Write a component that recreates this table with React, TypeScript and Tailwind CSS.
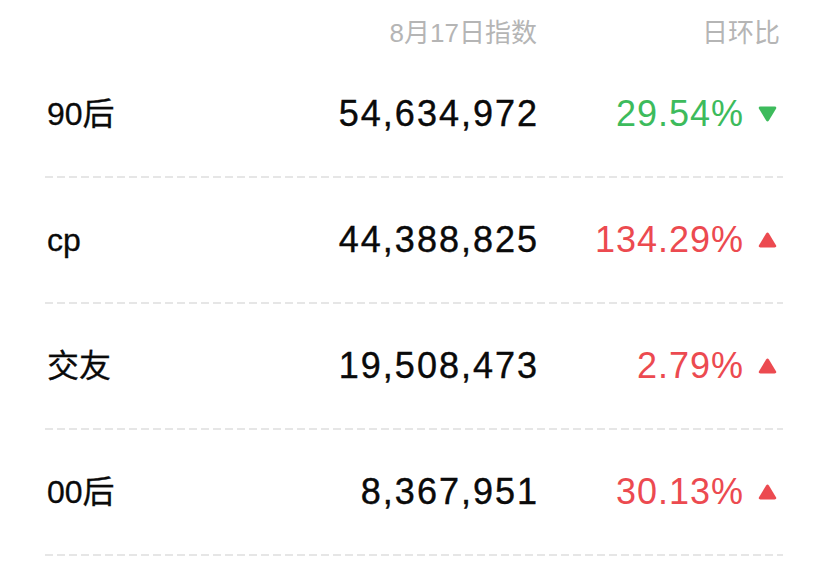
const rows = [
  { name: "90后", value: "54,634,972", pct: "29.54%", up: false },
  { name: "cp", value: "44,388,825", pct: "134.29%", up: true },
  { name: "交友", value: "19,508,473", pct: "2.79%", up: true },
  { name: "00后", value: "8,367,951", pct: "30.13%", up: true },
];

function Arrow({ up }: { up: boolean }) {
  return (
    <svg width="19" height="16" viewBox="0 0 19 16" className="shrink-0">
      {up ? (
        <path
          d="M8.1 1.6 Q9.5 -0.4 10.9 1.6 L18 13.2 Q19 15.4 16.6 15.4 L2.4 15.4 Q0 15.4 1 13.2 Z"
          fill="#ec4a50"
        />
      ) : (
        <path
          d="M8.1 14.4 Q9.5 16.4 10.9 14.4 L18 2.8 Q19 0.6 16.6 0.6 L2.4 0.6 Q0 0.6 1 2.8 Z"
          fill="#3dbb5c"
        />
      )}
    </svg>
  );
}

export default function App() {
  return (
    <main className="min-h-screen w-[828px] bg-white px-[45px] font-['Liberation_Sans','Noto_Sans_CJK_SC',sans-serif]">
      {/* header */}
      <div className="grid h-[52px] grid-cols-[1fr_auto_246px] pt-[20px] text-[26px] leading-[26px] text-[#b5b5b5]">
        <div />
        <div className="text-right">8月17日指数</div>
        <div className="pr-[3px] text-right">日环比</div>
      </div>

      {rows.map((r) => (
        <div key={r.name}>
          <div className="grid h-[124px] grid-cols-[1fr_auto_246px] items-center">
            <div className="pl-[2px] text-[32px] text-[#0a0a0a] [-webkit-text-stroke:0.3px_#0a0a0a]">
              {r.name}
            </div>
            <div className="text-right text-[36px] tracking-[2px] text-[#0a0a0a] [margin-right:-2px] [-webkit-text-stroke:0.4px_#0a0a0a]">
              {r.value}
            </div>
            <div className="flex items-center justify-end gap-[14px] pr-[6px]">
              <span
                className={
                  r.up
                    ? "text-[36px] tracking-[1px] text-[#ec4a50]"
                    : "text-[36px] tracking-[1px] text-[#3dbb5c]"
                }
              >
                {r.pct}
              </span>
              <Arrow up={r.up} />
            </div>
          </div>
          <div className="h-[2px] bg-[linear-gradient(to_right,#e6e6e6_8px,transparent_8px)] bg-[length:12px_2px] bg-repeat-x" />
        </div>
      ))}
    </main>
  );
}
